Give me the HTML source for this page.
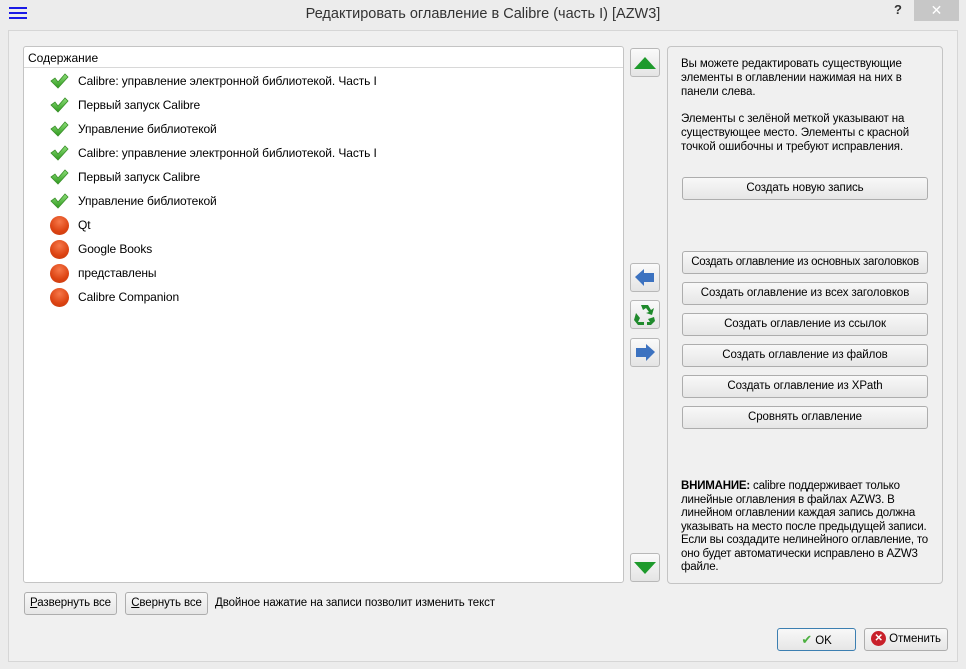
<!DOCTYPE html>
<html><head><meta charset="utf-8"><style>
*{box-sizing:border-box;margin:0;padding:0}
body{width:966px;height:669px;background:#ececec;font-family:"Liberation Sans",sans-serif;font-size:12px;color:#000;position:relative;overflow:hidden}
.a{position:absolute}
.inner{left:8px;top:30px;width:950px;height:632px;background:#f0f0f0;border:1px solid #d6d6d6}
.btn{position:absolute;background:linear-gradient(#f8f8f8,#e6e6e6);border:1px solid #adadad;border-radius:3px;text-align:center;font-size:11.5px;line-height:20px;white-space:nowrap;letter-spacing:-0.1px}
.row{position:absolute;left:50px;height:20px;line-height:20px;font-size:12px;letter-spacing:-0.1px}
.row span{position:absolute;left:28px;white-space:nowrap}
.ic{position:absolute;left:0;top:1px;width:19px;height:18px}
.dot{position:absolute;left:0;top:1px;width:19px;height:19px;border-radius:50%;background:radial-gradient(circle at 50% 30%,#f6784a,#dc4312 60%,#c33a0f)}
.abtn{position:absolute;left:630px;width:30px;height:29px;background:linear-gradient(#fafafa,#e4e4e4);border:1px solid #b8b8b8;border-radius:3px}
p{margin:0}
</style></head><body>
<div class="a" style="left:9px;top:7px;width:18px;height:2px;background:#1a1ae6"></div>
<div class="a" style="left:9px;top:12px;width:18px;height:2px;background:#1a1ae6"></div>
<div class="a" style="left:9px;top:17px;width:18px;height:2px;background:#1a1ae6"></div>
<div class="a" style="left:0;top:6px;width:966px;text-align:center;font-size:14.5px;color:#333">Редактировать оглавление в Calibre (часть I) [AZW3]</div>
<div class="a" style="left:894px;top:2px;font-size:13px;font-weight:bold;color:#333">?</div>
<div class="a" style="left:914px;top:0;width:45px;height:21px;background:#c7c7c7;color:#fff;text-align:center;font-size:14px;line-height:21px">✕</div>
<div class="a inner"></div>

<div class="a" style="left:23px;top:46px;width:601px;height:537px;background:#fff;border:1px solid #c4c4c4;border-radius:3px"></div>
<div class="a" style="left:24px;top:47px;width:599px;height:21px;border-bottom:1px solid #d8d8d8;padding:4px 0 0 4px;font-size:12px">Содержание</div>

<svg width="0" height="0" style="position:absolute"><defs><linearGradient id="g" x1="0" y1="0" x2="0" y2="1"><stop offset="0" stop-color="#8ee07a"/><stop offset="1" stop-color="#2f9a1e"/></linearGradient></defs></svg>
<div class="row" style="top:71px"><svg class="ic" viewBox="0 0 19 18"><path d="M1 9 L5 6 L8 10 L15 2 L18 5 L8 16 Z" fill="url(#g)" stroke="#3a8f2a" stroke-width=".8"/></svg><span>Calibre: управление электронной библиотекой. Часть I</span></div>
<div class="row" style="top:95px"><svg class="ic" viewBox="0 0 19 18"><path d="M1 9 L5 6 L8 10 L15 2 L18 5 L8 16 Z" fill="url(#g)" stroke="#3a8f2a" stroke-width=".8"/></svg><span>Первый запуск Calibre</span></div>
<div class="row" style="top:119px"><svg class="ic" viewBox="0 0 19 18"><path d="M1 9 L5 6 L8 10 L15 2 L18 5 L8 16 Z" fill="url(#g)" stroke="#3a8f2a" stroke-width=".8"/></svg><span>Управление библиотекой</span></div>
<div class="row" style="top:143px"><svg class="ic" viewBox="0 0 19 18"><path d="M1 9 L5 6 L8 10 L15 2 L18 5 L8 16 Z" fill="url(#g)" stroke="#3a8f2a" stroke-width=".8"/></svg><span>Calibre: управление электронной библиотекой. Часть I</span></div>
<div class="row" style="top:167px"><svg class="ic" viewBox="0 0 19 18"><path d="M1 9 L5 6 L8 10 L15 2 L18 5 L8 16 Z" fill="url(#g)" stroke="#3a8f2a" stroke-width=".8"/></svg><span>Первый запуск Calibre</span></div>
<div class="row" style="top:191px"><svg class="ic" viewBox="0 0 19 18"><path d="M1 9 L5 6 L8 10 L15 2 L18 5 L8 16 Z" fill="url(#g)" stroke="#3a8f2a" stroke-width=".8"/></svg><span>Управление библиотекой</span></div>
<div class="row" style="top:215px"><div class="dot"></div><span>Qt</span></div>
<div class="row" style="top:239px"><div class="dot"></div><span>Google Books</span></div>
<div class="row" style="top:263px"><div class="dot"></div><span>представлены</span></div>
<div class="row" style="top:287px"><div class="dot"></div><span>Calibre Companion</span></div>

<div class="abtn" style="top:48px"><svg width="28" height="27" viewBox="0 0 28 27"><path d="M3 20 L14 8 L25 20 Z" fill="#1e9a2c"/></svg></div>
<div class="abtn" style="top:263px"><svg width="28" height="27" viewBox="0 0 28 27"><path d="M4 13 L13 5 L13 9 L23 9 L23 18 L13 18 L13 22 Z" fill="#3c72c0"/></svg></div>
<div class="abtn" style="top:300px"><svg width="28" height="27" viewBox="0 0 28 27"><g fill="#1f8a2c"><path d="M10 4 L17 4 L20 9 L23 7 L21 14 L15 12 L18 11 L15 7 L12 9 Z"/><path d="M5 12 L9 17 L7 21 L13 21 L13 24 L7 24 L3 19 Z"/><path d="M23 16 L24 20 L20 24 L16 24 L16 21 L19 21 L17 18 Z"/></g></svg></div>
<div class="abtn" style="top:338px"><svg width="28" height="27" viewBox="0 0 28 27"><path d="M24 13 L15 5 L15 9 L5 9 L5 18 L15 18 L15 22 Z" fill="#3c72c0"/></svg></div>
<div class="abtn" style="top:553px"><svg width="28" height="27" viewBox="0 0 28 27"><path d="M3 8 L25 8 L14 20 Z" fill="#1e9a2c"/></svg></div>

<div class="a" style="left:667px;top:46px;width:276px;height:538px;border:1px solid #c4c4c4;border-radius:4px"></div>
<div class="a" style="left:681px;top:57px;width:255px;line-height:14px;font-size:11.5px;letter-spacing:-0.1px">
<p>Вы можете редактировать существующие элементы в оглавлении нажимая на них в панели слева.</p>
<p style="margin-top:13px">Элементы с зелёной меткой указывают на существующее место. Элементы с красной точкой ошибочны и требуют исправления.</p>
</div>
<div class="btn" style="left:682px;top:177px;width:246px;height:23px">Создать новую запись</div>
<div class="btn" style="left:682px;top:251px;width:246px;height:23px;letter-spacing:-0.3px">Создать оглавление из основных заголовков</div>
<div class="btn" style="left:682px;top:282px;width:246px;height:23px">Создать оглавление из всех заголовков</div>
<div class="btn" style="left:682px;top:313px;width:246px;height:23px">Создать оглавление из ссылок</div>
<div class="btn" style="left:682px;top:344px;width:246px;height:23px">Создать оглавление из файлов</div>
<div class="btn" style="left:682px;top:375px;width:246px;height:23px">Создать оглавление из XPath</div>
<div class="btn" style="left:682px;top:406px;width:246px;height:23px">Сровнять оглавление</div>
<div class="a" style="left:681px;top:480px;width:258px;line-height:13.5px;font-size:11.5px;letter-spacing:-0.2px"><b>ВНИМАНИЕ:</b> calibre поддерживает только линейные оглавления в файлах AZW3. В линейном оглавлении каждая запись должна указывать на место после предыдущей записи. Если вы создадите нелинейного оглавление, то оно будет автоматически исправлено в AZW3 файле.</div>

<div class="btn" style="left:24px;top:592px;width:93px;height:23px"><u>Р</u>азвернуть все</div>
<div class="btn" style="left:125px;top:592px;width:83px;height:23px"><u>С</u>вернуть все</div>
<div class="a" style="left:215px;top:597px;font-size:11.5px;letter-spacing:-0.1px">Двойное нажатие на записи позволит изменить текст</div>

<div class="btn" style="left:777px;top:628px;width:79px;height:23px;border-color:#3c7fb1;line-height:21px"><span style="color:#4cb040;font-size:13px">✔</span> OK</div>
<div class="btn" style="left:864px;top:628px;width:84px;height:23px;line-height:21px"><span style="display:inline-block;width:15px;height:15px;border-radius:50%;background:#c8202a;color:#fff;font-size:10px;line-height:15px;vertical-align:middle;font-weight:bold">✕</span> Отменить</div>
</body></html>
